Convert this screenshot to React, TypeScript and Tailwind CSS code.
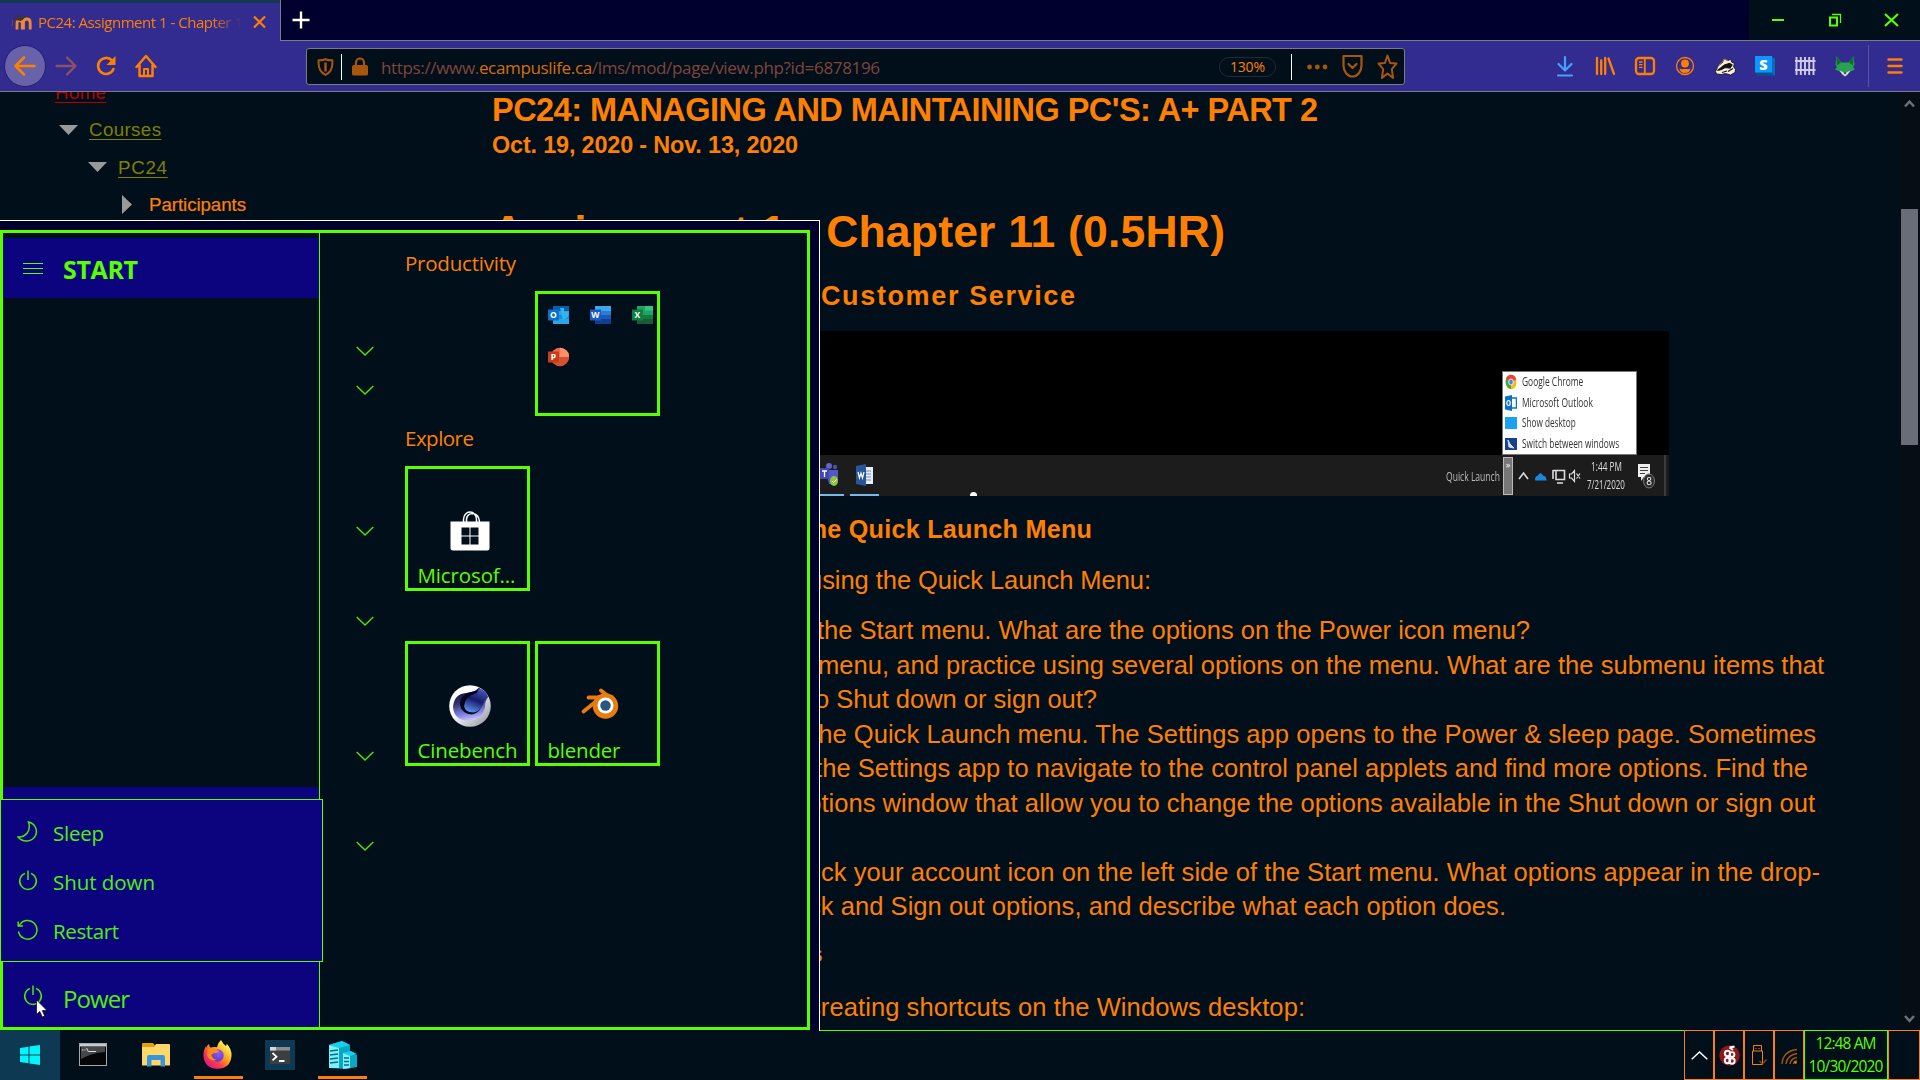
import { useLayoutEffect, useRef, type ReactNode } from "react";

const ARIAL = "font-['Liberation_Sans',Arial,sans-serif]";
const SEGOE = "font-['Open_Sans','Noto_Sans',sans-serif]";

/** A single line of text whose tracking is tuned so that it spans `w` pixels. */
function Fit({ w, className = "", children }: { w: number; className?: string; children: ReactNode }) {
  const ref = useRef<HTMLSpanElement>(null);
  useLayoutEffect(() => {
    const el = ref.current;
    if (!el) return;
    el.style.letterSpacing = "0px";
    const n = (el.textContent || "").length;
    const ls = (w - el.getBoundingClientRect().width) / Math.max(1, n - 1);
    el.style.letterSpacing = `${ls}px`;
    el.style.marginRight = `${-ls}px`;
  }, [w]);
  return (
    <span ref={ref} className={`inline-block whitespace-pre ${className}`}>
      {children}
    </span>
  );
}

/** A single line of text condensed horizontally to span `w` pixels. */
function Squeeze({ w, className = "", children }: { w: number; className?: string; children: ReactNode }) {
  const ref = useRef<HTMLSpanElement>(null);
  useLayoutEffect(() => {
    const el = ref.current;
    if (!el) return;
    el.style.transform = `scaleX(${w / el.offsetWidth})`;
  }, [w]);
  return (
    <span className={`block ${className}`} style={{ width: w }}>
      <span ref={ref} className="inline-block origin-left whitespace-pre">
        {children}
      </span>
    </span>
  );
}

/* ---------- browser chrome ---------- */

function TabStrip() {
  return (
    <div className="flex h-[41px] bg-[#00002e]">
      <div className="flex h-[41px] w-[281px] flex-col border-r border-[#7b7b86] bg-[#322b90]">
        <div className="h-[3px] bg-[#133a52]" />
        <div className="flex flex-1 items-center">
          <svg className="ml-[11px] h-[16px] w-[21px]" viewBox="0 0 21 16">
            <path d="M6 15.500V9Q6 6.500 8.500 6.500t2.800 2.500V15.500M12.500 15.500V8.500Q12.500 5 15.800 5q3.400 0 3.400 3.500V15.500" fill="none" stroke="#f08a2c" strokeWidth="2.800" />
            <path d="M1 5.500L8 1l7 1.500L10 7 4 6z" fill="#3b3345" />
            <path d="M1.500 5.500V12" stroke="#5b4a58" />
          </svg>
          <div className="ml-[6px] w-[206px] overflow-hidden [mask-image:linear-gradient(to_right,#000_84%,transparent_99%)]">
            <Fit w={205} className="text-[15px] leading-[22px] text-[#ff8000]">
              PC24: Assignment 1 - Chapter 1
            </Fit>
          </div>
          <svg className="ml-[9px] h-[14px] w-[13px]" viewBox="0 0 13 14">
            <path d="M1 1.500L12 12.500M12 1.500L1 12.500" stroke="#ff8000" strokeWidth="2.200" />
          </svg>
        </div>
      </div>
      <div className="flex flex-1 border-b border-[#7b7b86]">
        <svg className="ml-[11px] mt-[11px] h-[18px] w-[18px]" viewBox="0 0 18 18">
          <path d="M9 0.500V17.500M0.500 9H17.500" stroke="#fff" strokeWidth="2.400" />
        </svg>
        <div className="ml-auto flex h-[40px] w-[171px] bg-[#000f1a]">
          <svg className="h-[40px] w-[171px]" viewBox="0 0 171 40" fill="none" stroke="#59ff00">
            <path d="M23 20H35" strokeWidth="2" />
            <path d="M81 17.500h7v8h-7z" strokeWidth="2" />
            <path d="M83 14.500H91.500V23" strokeWidth="1.300" />
            <path d="M136 14L149 26M149 14L136 26" strokeWidth="2.200" />
          </svg>
        </div>
      </div>
    </div>
  );
}

function NavButtons() {
  return (
    <div className="flex h-[50px] w-[306px] items-center">
      <div className="ml-[4px] flex size-[42px] items-center justify-center rounded-full border border-[#231d75] bg-[#6863a8]">
        <svg className="size-[22px]" viewBox="0 0 22 22" fill="none" stroke="#ff8000" strokeWidth="2.500" strokeLinecap="round" strokeLinejoin="round">
          <path d="M20.500 11H2M10 2.500L1.500 11l8.500 8.500" />
        </svg>
      </div>
      <svg className="ml-[9px] size-[22px]" viewBox="0 0 22 22" fill="none" stroke="#8e5066" strokeWidth="2.300" strokeLinecap="round" strokeLinejoin="round">
        <path d="M1.500 11H20M12 2.500l8.500 8.500-8.500 8.500" />
      </svg>
      <svg className="ml-[18px] size-[22px]" viewBox="0 0 22 22" fill="none">
        <path d="M17 5.500A8 8 0 1 0 18.500 14" stroke="#ff8000" strokeWidth="2.600" strokeLinecap="round" />
        <path d="M20.500 1V10H11.500z" fill="#ff8000" />
      </svg>
      <svg className="ml-[18px] h-[24px] w-[22px]" viewBox="0 0 22 24" fill="none" stroke="#ff8000" strokeWidth="2.500" strokeLinejoin="round" strokeLinecap="round">
        <path d="M1.500 13L11 2l9.500 11M4.500 11.500V22H17.500V11.500" />
        <path d="M9 22V15h4V22" strokeWidth="2" />
      </svg>
    </div>
  );
}

function UrlBar() {
  return (
    <div className="mt-[7px] flex h-[37px] w-[1099px] items-center rounded-[3px] border border-[#7b7b86] bg-[#000f1a]">
      <svg className="ml-[10px] h-[18px] w-[17px]" viewBox="0 0 17 18" fill="none" stroke="#a8560c">
        <path d="M8.500 1.200C6.500 2 4 2.300 1.700 2.300c-.6 6 .6 11.700 6.800 14.500 6.200-2.800 7.400-8.500 6.800-14.500-2.300 0-4.800-.3-6.800-1.100z" strokeWidth="2" />
        <path d="M8.500 4.500v9" strokeWidth="2.500" />
      </svg>
      <div className="ml-[7px] h-[26px] w-px bg-white" />
      <svg className="ml-[10px] h-[19px] w-[16px]" viewBox="0 0 16 19">
        <rect y="8" width="16" height="10.500" rx="1.500" fill="#a8560c" />
        <path d="M4 9V5.500a4 4 0 0 1 8 0V9" fill="none" stroke="#a8560c" strokeWidth="2.200" />
      </svg>
      <div className="ml-[13px] w-[520px]">
        <Fit w={499} className="mt-[2px] text-[17px] leading-[24px] text-[#80453a]">
          https://www.<span className="text-[#d96e06]">ecampuslife.ca</span>/lms/mod/page/view.php?id=6878196
        </Fit>
      </div>
      <div className="ml-[318px] flex h-[20px] w-[57px] items-center justify-center rounded-full border border-[#1f2b38]">
        <Fit w={35} className="text-[14px] leading-[16px] text-[#ff8000]">130%</Fit>
      </div>
      <div className="ml-[15px] h-[26px] w-px bg-white" />
      <svg className="ml-[15px] h-[6px] w-[21px]" viewBox="0 0 21 6" fill="#a8560c">
        <circle cx="2.600" cy="3" r="2.400" />
        <circle cx="10.300" cy="3" r="2.400" />
        <circle cx="18" cy="3" r="2.400" />
      </svg>
      <svg className="ml-[14px] h-[25px] w-[21px]" viewBox="0 0 21 25" fill="none" stroke="#a8560c" strokeWidth="2.200" strokeLinecap="round" strokeLinejoin="round">
        <path d="M1.500 2h18V11.500c0 6-4 11-9 11S1.500 17.500 1.500 11.500z" />
        <path d="M6.500 10l4 4 4-4" />
      </svg>
      <svg className="ml-[14px] h-[26px] w-[21px]" viewBox="0 0 21 26" preserveAspectRatio="none" fill="none" stroke="#a8560c" strokeWidth="2" strokeLinejoin="round">
        <path d="M10.500 1.500l2.600 7.500 6.400.6-4.700 5.600 1.300 8.800-5.600-4.500-5.600 4.500 1.300-8.800L1.500 9.600l6.400-.6z" />
      </svg>
    </div>
  );
}

function ToolbarIcons() {
  return (
    <div className="ml-[149px] flex h-[50px] items-center">
      <div className="flex gap-[18px]">
        <svg className="size-[22px]" viewBox="0 0 22 22" fill="none" stroke="#45a1ff" strokeWidth="2.200" strokeLinecap="round" strokeLinejoin="round">
          <path d="M11 2V15M4.500 9L11 15.500 17.500 9M4 20.500H18" />
        </svg>
        <svg className="size-[22px]" viewBox="0 0 22 22" stroke="#ff8000" strokeWidth="2.300" strokeLinecap="round">
          <path d="M3 3V19M7.200 5.500V19M11.200 3V19M14.500 3.500L20 19" />
        </svg>
        <svg className="size-[22px]" viewBox="0 0 22 22" fill="none" stroke="#ff8000">
          <rect x="2" y="3" width="18" height="16" rx="3" strokeWidth="2.300" />
          <path d="M10.800 3V19" strokeWidth="1.800" />
          <path d="M5 7h3.500M5 9.700h3.500M5 12.400h3.500" strokeWidth="1.300" />
        </svg>
        <svg className="size-[22px]" viewBox="0 0 22 22">
          <circle cx="11" cy="11" r="8.500" fill="none" stroke="#ff8000" strokeWidth="1.300" />
          <ellipse cx="11" cy="8.600" rx="3.900" ry="4" fill="#ff8000" />
          <path d="M5.500 13.500c2 1.200 3.500.5 5.500.5s3.500.7 5.500-.5c-.5 3-2.500 4.500-5.500 4.500s-5-1.500-5.500-4.500z" fill="#ff8000" />
        </svg>
        <svg className="size-[22px]" viewBox="0 0 22 22">
          <path d="M1.500 16.500L4 11 8.500 7.500 10 4l4 1.500 3-1.500.500 3 3 1.500-1 3 2 3-.5 3-4.500 2.500-5-1.500-4 1-5-.5z" fill="#f4efe6" stroke="#1b1510" strokeWidth="0.900" />
          <path d="M3.500 15.500l7-5.500 5-1.500 2.500 1.500-2 3-5-.5-3.500 2zM8 17.500l5-1.500M14 16.500l5-3" stroke="#181310" strokeWidth="1.200" fill="#181310" />
          <path d="M4.500 10.500L8.500 7 10 4l4 1.500" stroke="#b27b40" fill="none" />
        </svg>
        <svg className="size-[22px]" viewBox="0 0 22 22">
          <path d="M1 1h16l4 3v17H4l-3-4z" fill="#06508f" />
          <path d="M17 1l4 3v17l-4-3.500z" fill="#0b6ab8" />
          <path d="M1 1h17v16.500H1z" fill="#0d96ff" />
          <text x="9.500" y="14.500" fontSize="14.500" fontWeight="800" fill="#fff" textAnchor="middle" className={SEGOE}>S</text>
        </svg>
        <svg className="size-[22px]" viewBox="0 0 22 22" stroke="#cfcbe6" strokeWidth="1.900">
          <path d="M2.500 2V20M6.800 2V20M11 2V20M15.200 2V20M19.500 2V20M1 6H21.500M1 15H21.500" />
        </svg>
        <svg className="size-[22px]" viewBox="0 0 22 22">
          <path d="M2.500 1l5 6.500h7l5-6.500 1 9-1.500 2 2 2.500-4.500 2-5.500 5-5.500-5-4.500-2 2-2.500-1.500-2z" fill="#2aa052" />
          <path d="M2.500 1l4.500 6.500-4 3zM19.500 1L15 7.500l4 3z" fill="#0f6b2c" />
          <path d="M5.500 15.500l3.500 1.500 2 1 2-1 3.500-1.500-3 4L11 21.500 8.500 19.500z" fill="#d8dce0" />
          <path d="M9.500 17.500h3L11 19.500z" fill="#222" />
        </svg>
      </div>
      <div className="ml-[12px] h-[42px] w-px bg-[#5853a3]" />
      <svg className="ml-[18px] h-[22px] w-[16px]" viewBox="0 0 16 22" stroke="#ff8000" strokeWidth="2.400" strokeLinecap="round">
        <path d="M1.500 4.500H14.500M1.500 11H14.500M1.500 17.500H14.500" />
      </svg>
    </div>
  );
}

/* ---------- page ---------- */

function Sidebar() {
  const link = "underline decoration-1 underline-offset-[3px]";
  return (
    <nav className={`w-[492px] shrink-0 text-[18.700px] leading-[37px] ${ARIAL}`}>
      <div className="-mt-[18px] ml-[55px] h-[37px] text-[#b80000]">
        <Fit w={51} className={link}>Home</Fit>
      </div>
      <div className="ml-[59px] flex h-[37px] items-center">
        <svg className="h-[10px] w-[19px]" viewBox="0 0 19 10"><path d="M0 0H19L9.500 10z" fill="#999" /></svg>
        <Fit w={72} className={`ml-[11px] text-[#808000] ${link}`}>Courses</Fit>
      </div>
      <div className="ml-[88px] flex h-[38px] items-center">
        <svg className="h-[10px] w-[19px]" viewBox="0 0 19 10"><path d="M0 0H19L9.500 10z" fill="#999" /></svg>
        <Fit w={49} className={`ml-[11px] text-[#808000] ${link}`}>PC24</Fit>
      </div>
      <div className="ml-[122px] flex h-[37px] items-center">
        <svg className="h-[19px] w-[10px]" viewBox="0 0 10 19"><path d="M0 0V19L10 9.500z" fill="#999" /></svg>
        <Fit w={97} className="ml-[17px] text-[#ff8000] [-webkit-text-stroke:0.2px_#ff8000]">Participants</Fit>
      </div>
    </nav>
  );
}

const BODY: { left: number; right: number; text: string }[] = [
  { left: 817, right: 1530, text: "the Start menu. What are the options on the Power icon menu?" },
  { left: 818, right: 1824, text: "menu, and practice using several options on the menu. What are the submenu items that" },
  { left: 808, right: 1097, text: "to Shut down or sign out?" },
  { left: 811, right: 1816, text: "the Quick Launch menu. The Settings app opens to the Power & sleep page. Sometimes" },
  { left: 815, right: 1808, text: "the Settings app to navigate to the control panel applets and find more options. Find the" },
  { left: 793, right: 1815, text: "options window that allow you to change the options available in the Shut down or sign out" },
  { left: 0, right: 0, text: "" },
  { left: 791, right: 1820, text: "Click your account icon on the left side of the Start menu. What options appear in the drop-" },
  { left: 788, right: 1506, text: "lock and Sign out options, and describe what each option does." },
];

function EmbeddedShot() {
  const items = [
    { label: "Google Chrome", w: 61 },
    { label: "Microsoft Outlook", w: 71 },
    { label: "Show desktop", w: 54 },
    { label: "Switch between windows", w: 97 },
  ];
  return (
    <div className={`ml-[328px] mt-[16px] flex h-[165px] w-[849px] flex-col bg-black ${SEGOE}`}>
      <div className="ml-[682px] mt-[40px] flex h-[84px] w-[135px] flex-col justify-around border border-[#777] bg-white">
        {items.map((it, i) => (
          <div key={it.label} className="flex h-[20px] items-center blur-[0.4px]">
            <svg className="ml-[2px] h-[16px] w-[12px]" viewBox="0 0 12 16">
              {i === 0 && (
                <>
                  <ellipse cx="6" cy="8" rx="5.500" ry="7.300" fill="#fbbc05" />
                  <path d="M6 8L.8 5.500Q2 .7 6 .7t5.200 4.800z" fill="#ea4335" />
                  <path d="M6 8L1 5Q-.5 13 6 15.300z" fill="#34a853" />
                  <ellipse cx="6" cy="8" rx="2.300" ry="3" fill="#4285f4" stroke="#fff" strokeWidth=".8" />
                </>
              )}
              {i === 1 && (
                <>
                  <path d="M5 3h6.500v10H5z" fill="#fff" stroke="#0a72c6" strokeWidth="1.500" />
                  <path d="M0 1.500L7 0v16l-7-1.500z" fill="#0a72c6" />
                  <ellipse cx="3.500" cy="8" rx="1.700" ry="2.500" fill="none" stroke="#fff" strokeWidth="1.200" />
                </>
              )}
              {i === 2 && <path d="M0 2h12v12H0z" fill="#1ba1f2" />}
              {i === 3 && (
                <>
                  <path d="M0 2h12v12H0z" fill="#17408f" />
                  <path d="M3 4l2 4 4 4-5-1z" fill="#cfe2f7" stroke="#cfe2f7" />
                </>
              )}
            </svg>
            <Squeeze w={it.w} className="ml-[5px] text-[12px] leading-[16px] text-[#333]">{it.label}</Squeeze>
          </div>
        ))}
      </div>
      <div className="mt-auto flex h-[41px] items-center bg-[#1c1c1c]">
        <div className="relative h-[41px] w-[21px]">
          <svg className="mt-[7px] h-[27px] w-[21px] blur-[0.4px]" viewBox="0 0 21 27">
            <circle cx="9" cy="4" r="3" fill="#6264c9" />
            <circle cx="15" cy="5" r="2.200" fill="#4b50b8" />
            <path d="M6 8h12v9q-3 6-9 5z" fill="#5558c4" />
            <path d="M0 6h9v11H0z" fill="#4146b4" />
            <path d="M2 9h5M4.500 9v6" stroke="#fff" strokeWidth="1.300" />
            <ellipse cx="14" cy="19" rx="4" ry="5" fill="#8cc63c" />
            <path d="M12 19l1.500 1.500 3-3" stroke="#fff" fill="none" />
          </svg>
          <div className="absolute bottom-0 left-0 h-[2px] w-[24px] bg-[#76b9ed]" />
        </div>
        <div className="relative ml-[9px] h-[41px] w-[30px]">
          <svg className="ml-[6px] mt-[9px] h-[22px] w-[17px] blur-[0.4px]" viewBox="0 0 17 22">
            <path d="M8 3h9v17H8z" fill="#e8eefa" />
            <path d="M10 7h5M10 10h5M10 13h5M10 16h5" stroke="#6b8fc9" />
            <path d="M0 2l10-2v22l-10-2z" fill="#2a5699" />
            <path d="M2 8l1.500 6L5 9l1.500 5L8 8" stroke="#fff" fill="none" strokeWidth="1.200" />
          </svg>
          <div className="absolute bottom-0 left-0 h-[2px] w-[29px] bg-[#76b9ed]" />
        </div>
        <div className="ml-[90px] mt-auto h-[4px] w-[7px] rounded-t-full bg-white" />
        <Squeeze w={54} className="ml-[469px] text-[13px] leading-[16px] text-[#bbb] blur-[0.3px]">Quick Launch</Squeeze>
        <div className="ml-[3px] h-[38px] w-[10px] border border-[#bbb] bg-[#777] text-center text-[9px] leading-[14px] text-white">»</div>
        <svg className="ml-[5px] h-[18px] w-[63px] blur-[0.3px]" viewBox="0 0 63 18" fill="none" stroke="#ddd" strokeWidth="1.600">
          <path d="M1 12l4.500-6L10 12" />
          <path d="M17 13q0-4 3-4.500 2.500-5 5 0 3.500 .5 3.500 5H18.500q-1.500 0-1.500-.5z" fill="#1a86dc" stroke="none" />
          <path d="M38 3.500h8.500v9h-8.500zM35 3v9M39 16h6M35 3.500h3" />
          <path d="M51.500 7h2l3-3.500v11l-3-3.500h-2zM58.500 6.500l3.500 5M62 6.500l-3.500 5" strokeWidth="1.200" />
        </svg>
        <div className="ml-[5px] flex w-[40px] flex-col items-center text-[#ddd] blur-[0.3px]">
          <Squeeze w={31} className="text-[12px] leading-[18px]">1:44 PM</Squeeze>
          <Squeeze w={38} className="text-[12px] leading-[18px]">7/21/2020</Squeeze>
        </div>
        <svg className="ml-[11px] h-[26px] w-[20px] blur-[0.3px]" viewBox="0 0 20 26">
          <path d="M1 1h12v13H7l-3 4v-4H1z" fill="#eee" />
          <path d="M3 4.500h8M3 7.500h8M3 10.500h5" stroke="#444" />
          <ellipse cx="12" cy="18" rx="5.500" ry="7" fill="#2c2c2c" stroke="#777" />
          <text x="12" y="22" fontSize="10" fill="#fff" textAnchor="middle" className={SEGOE}>8</text>
        </svg>
        <div className="ml-[7px] h-[41px] w-[2px] bg-[#3c3c3c]" />
      </div>
    </div>
  );
}

function Article() {
  const bodySize = "text-[25.500px]";
  return (
    <main className={`flex w-[1407px] shrink-0 flex-col text-[#ff8000] ${ARIAL}`}>
      <h2 className="h-[36px] text-[32.500px] font-bold leading-[36px]">
        <Fit w={826}>PC24: MANAGING AND MAINTAINING PC'S: A+ PART 2</Fit>
      </h2>
      <h3 className="h-[34px] text-[23.400px] font-bold leading-[34px]">
        <Fit w={306}>Oct. 19, 2020 - Nov. 13, 2020</Fit>
      </h3>
      <h1 className="mt-[42px] h-[56px] text-[44.500px] font-bold leading-[56px]">
        <Fit w={733}>Assignment 1 - Chapter 11 (0.5HR)</Fit>
      </h1>
      <h4 className="ml-[329px] mt-[18px] h-[37px] text-[27px] font-bold leading-[37px]">
        <Fit w={254}>Customer Service</Fit>
      </h4>
      <EmbeddedShot />
      <h4 className="ml-[311px] mt-[15px] h-[36px] text-[25.200px] font-bold leading-[36px]">
        <Fit w={289}>the Quick Launch Menu</Fit>
      </h4>
      <p className={`ml-[316px] mt-[15px] h-[36px] leading-[36px] ${bodySize}`}>
        <Fit w={343}>using the Quick Launch Menu:</Fit>
      </p>
      <div className={`mt-[15px] flex w-[1400px] flex-col ${bodySize}`}>
        {BODY.map((l, i) => (
          <div key={i} className="h-[34.500px] leading-[34.500px]" style={{ paddingLeft: Math.max(0, l.left - 492) }}>
            {l.text && <Fit w={l.right - l.left}>{l.text}</Fit>}
          </div>
        ))}
      </div>
      <h4 className="ml-[317px] mt-[12px] h-[36px] text-[24.500px] font-bold leading-[36px]">s</h4>
      <p className={`ml-[316px] mt-[17px] h-[36px] leading-[36px] ${bodySize}`}>
        <Fit w={497}>creating shortcuts on the Windows desktop:</Fit>
      </p>
    </main>
  );
}

function ScrollBar() {
  return (
    <div className="flex w-[21px] flex-col items-center bg-[#060d15]">
      <svg className="mt-[6px] h-[11px] w-[11px]" viewBox="0 0 11 11" fill="none" stroke="#6b7079" strokeWidth="2.500">
        <path d="M1 8.500L5.500 3.500 10 8.500" />
      </svg>
      <div className="mt-[100px] h-[236px] w-[17px] bg-[#6a6d77]" />
      <svg className="mb-[6px] mt-auto h-[11px] w-[11px]" viewBox="0 0 11 11" fill="none" stroke="#6b7079" strokeWidth="2.500">
        <path d="M1 3L5.500 8 10 3" />
      </svg>
    </div>
  );
}

/* ---------- start menu ---------- */

function PowerGlyph({ className = "" }: { className?: string }) {
  return (
    <svg className={`h-[21px] w-[20px] ${className}`} viewBox="0 0 20 21" fill="none" stroke="#4fe60a" strokeWidth="1.500">
      <path d="M7 3.400A8.300 8.300 0 1 0 13 3.400M10 0.500V10" />
    </svg>
  );
}

function Chevron({ className }: { className: string }) {
  return (
    <svg className={`h-[10px] w-[18px] shrink-0 ${className}`} viewBox="0 0 18 10" fill="none" stroke="#4fe60a" strokeWidth="1.400">
      <path d="M0.700 1L9 9 17.300 1" />
    </svg>
  );
}

function OfficeIcon({ letter }: { letter: "O" | "W" | "X" | "P" }) {
  const c = {
    O: ["#0a5ea8", "#28a8ea", "#50d9ff", "#0f6fd0"],
    W: ["#41a5ee", "#2b7cd3", "#103f91", "#185abd"],
    X: ["#21a366", "#33c481", "#185c37", "#107c41"],
    P: ["#ff8f6b", "#ff8f6b", "#d35230", "#c43e1c"],
  }[letter];
  return (
    <svg className="h-[20px] w-[21px]" viewBox="0 0 21 20">
      {letter === "P" ? (
        <>
          <circle cx="12" cy="10" r="9.200" fill={c[2]} />
          <path d="M12 .8a9.200 9.200 0 0 1 9.200 9.200H12z" fill={c[0]} />
          <path d="M12 .8A9.200 9.200 0 0 0 2.800 10H12z" fill="#ed6c47" />
        </>
      ) : (
        <>
          <path d="M5 1h16v6H5z" fill={c[0]} />
          <path d="M5 6h16v4H5z" fill={letter === "X" ? "#21a366" : c[1]} />
          <path d="M5 10h16v5H5z" fill={letter === "O" ? "#1490df" : c[3]} />
          <path d="M5 14h16v5H5z" fill={letter === "O" ? "#28a8ea" : c[2]} />
          {letter === "O" && <path d="M12 3h4v4h4v5l-5 3z" fill="#33b4f0" />}
          {letter === "X" && <path d="M13 1h8v4.500h-8z" fill="#33c481" />}
        </>
      )}
      <path d="M0 4.500h11v11H0z" fill={c[3]} />
      <text x="5.300" y="13" fontSize="8.500" fontWeight="700" fill="#fff" textAnchor="middle" className={SEGOE}>{letter}</text>
    </svg>
  );
}

function Tile({ label, w, children }: { label: string; w: number; children: ReactNode }) {
  return (
    <div className="relative flex size-[125px] flex-col items-center border-[3px] border-[#59ff00]">
      {children}
      <div className="absolute bottom-0 left-[9.500px] text-[20.500px] leading-[25px] text-[#59ff00]">
        <Fit w={w}>{label}</Fit>
      </div>
    </div>
  );
}

function PowerMenu() {
  const row = "flex h-[49px] items-center text-[20.500px] leading-[26px]";
  return (
    <div className="absolute left-0 top-[578px] flex h-[163px] w-[323px] flex-col border border-[#59ff00] bg-[#0c047e] pt-[7px] text-[#4ff00c]">
      <div className={row}>
        <svg className="ml-[16px] h-[21px] w-[21px]" viewBox="0 0 21 21" fill="none" stroke="#4fe60a" strokeWidth="1.500">
          <path d="M11.500 1C18 2.500 21 9 18.500 14.500 15.500 21 6 22 1 16 8.500 16.500 14.500 10 11.500 1z" />
        </svg>
        <Fit w={51} className="ml-[15px] mt-[2px]">Sleep</Fit>
      </div>
      <div className={row}>
        <PowerGlyph className="ml-[17px]" />
        <Fit w={102} className="ml-[15px] mt-[2px]">Shut down</Fit>
      </div>
      <div className={row}>
        <svg className="ml-[16px] h-[21px] w-[21px]" viewBox="0 0 21 21" fill="none" stroke="#4fe60a" strokeWidth="1.500">
          <path d="M1.500 12.500A9.300 9.300 0 1 0 2.500 6.300M1.200 2.500V7H6" />
        </svg>
        <Fit w={66} className="ml-[15px] mt-[2px]">Restart</Fit>
      </div>
    </div>
  );
}

function StartMenu() {
  return (
    <section className={`absolute left-0 top-[220px] h-[811px] w-[820px] border-r border-t border-white bg-[#00002e] pb-px pr-[9px] pt-[9px] ${SEGOE}`}>
      <div className="flex h-full w-full border-[3px] border-[#59ff00] bg-[#000f1a]">
        <div className="flex w-[317px] shrink-0 flex-col border-r border-[#59ff00] pt-[5px]">
          <div className="flex h-[60px] items-center bg-[#0c047e]">
            <div className="ml-[20px] flex w-[20px] flex-col gap-[4px]">
              <div className="h-px bg-[#59ff00]" />
              <div className="h-px bg-[#59ff00]" />
              <div className="h-px bg-[#59ff00]" />
            </div>
            <Fit w={75} className="ml-[20px] mt-px text-[25px] font-bold leading-[32px] text-[#59ff00]">START</Fit>
          </div>
          <div className="mt-auto flex h-[240px] flex-col justify-end bg-[#0c047e]">
            <div className="flex h-[65px] items-center">
              <PowerGlyph className="mt-[1px] ml-[20px]" />
              <Fit w={67} className="ml-[20px] mt-[8px] text-[24px] leading-[32px] text-[#4ff00c]">Power</Fit>
            </div>
          </div>
        </div>
        <div className="flex w-[86px] flex-col items-center pl-[4px]">
          <Chevron className="mt-[113px]" />
          <Chevron className="mt-[29px]" />
          <Chevron className="mt-[131px]" />
          <Chevron className="mt-[80px]" />
          <Chevron className="mt-[125px]" />
          <Chevron className="mt-[80px]" />
        </div>
        <div className="-ml-px flex flex-col text-[#ff8000]">
          <div className="mt-[16px] h-[42px] text-[20.500px] leading-[28px]"><Fit w={111}>Productivity</Fit></div>
          <div className="ml-[130px] grid size-[125px] grid-cols-[42px_42px_42px] grid-rows-[42px_42px] border-[3px] border-[#59ff00] pl-[10px] pt-[11px]">
            <OfficeIcon letter="O" />
            <OfficeIcon letter="W" />
            <OfficeIcon letter="X" />
            <OfficeIcon letter="P" />
          </div>
          <div className="mt-[8px] h-[42px] text-[20.500px] leading-[28px]"><Fit w={69}>Explore</Fit></div>
          <Tile label="Microsof..." w={98}>
            <svg className="ml-[5px] mt-[42px] h-[40px] w-[40px]" viewBox="0 0 40 40">
              <path d="M13.500 11V8.500a6.500 7.500 0 0 1 13 0V11M16.500 11V8.500Q17 2.500 23 2.500 29 3.500 29.500 11" fill="none" stroke="#fff" strokeWidth="1.500" />
              <path d="M.5 10.500h39V37q0 2.500-2.500 2.500H3Q.5 39.500.5 37z" fill="#fff" />
              <path d="M11.500 16.500h8v8h-8zM20.500 16.500h8v8h-8zM11.500 25.500h8v8h-8zM20.500 25.500h8v8h-8z" fill="#000f1a" />
            </svg>
          </Tile>
          <div className="mt-[50px] flex gap-[5px]">
            <Tile label="Cinebench" w={100}>
              <svg className="ml-[5px] mt-[41px] size-[42px]" viewBox="0 0 42 42">
                <defs>
                  <linearGradient id="cbRing" x1="0" y1="0" x2="1" y2="1">
                    <stop offset="0.400" stopColor="#fff" />
                    <stop offset="1" stopColor="#8b8e9a" />
                  </linearGradient>
                  <linearGradient id="cbBall" x1="0.200" y1="0" x2="0.400" y2="1">
                    <stop offset="0" stopColor="#070922" />
                    <stop offset="0.450" stopColor="#33336f" />
                    <stop offset="0.800" stopColor="#8083e8" />
                    <stop offset="1" stopColor="#c8c9f5" />
                  </linearGradient>
                  <linearGradient id="cbDrop" x1="0.700" y1="0" x2="0.300" y2="1">
                    <stop offset="0" stopColor="#4a5cc4" />
                    <stop offset="0.500" stopColor="#141a66" />
                    <stop offset="1" stopColor="#5f92f2" />
                  </linearGradient>
                </defs>
                <circle cx="21" cy="21" r="20.800" fill="url(#cbRing)" />
                <path d="M30 2.500L39 12Q36 16 36 22 33 36 19 36 5 35 4 22 5 9 17 8 25 8 30 2.500z" fill="url(#cbBall)" />
                <path d="M29 5.500Q10 8 11 20q2 9 12 9.500 10-2 12-16z" fill="#05061c" />
                <path d="M30 3q8 3 9 9-3 1-5 7-3 8-10 8.500-8-.5-9-6.500Q16 11 28 8z" fill="url(#cbDrop)" />
              </svg>
            </Tile>
            <Tile label="blender" w={73}>
              <svg className="ml-[5px] mt-[44px] h-[32px] w-[38px]" viewBox="0 0 38 32">
                <circle cx="24.500" cy="18" r="12.700" fill="#e87d0d" />
                <path d="M2.500 23.500L18 11M7.500 9.500H24M20 2.500L32 12" stroke="#e87d0d" strokeWidth="3.800" strokeLinecap="round" />
                <path d="M13 12l8-4 8 4-10 8-7-1z" fill="#e87d0d" />
                <circle cx="24.500" cy="17.500" r="8" fill="#fff" />
                <circle cx="24.500" cy="17.500" r="5.200" fill="#265787" />
              </svg>
            </Tile>
          </div>
        </div>
      </div>
      <PowerMenu />
      <svg className="absolute left-[36px] top-[778px] h-[19px] w-[12px]" viewBox="0 0 12 19">
        <path d="M.5 .8V15.500L3.800 12.500 6.300 18 8.700 17 6.300 11.600H11z" fill="#fff" stroke="#000" strokeWidth="0.700" />
      </svg>
    </section>
  );
}

/* ---------- taskbar ---------- */

function Taskbar() {
  const cell = "flex h-[50px] w-[30px] items-center justify-center border border-[#ff8000]";
  return (
    <footer className={`flex h-[50px] bg-[#000f1a] ${SEGOE}`}>
      <div className="z-10 flex w-[60px] items-center justify-center bg-[#0d3a52]">
        <svg className="size-[20px]" viewBox="0 0 20 20" fill="#00f6ff">
          <path d="M0 3l8.500-1.200V9.500H0zM9.500 1.600L20 0V9.500H9.500zM0 10.500h8.500v7.700L0 17zM9.500 10.500H20V20L9.500 18.400z" />
        </svg>
      </div>
      <div className="flex w-[760px] items-start">
        <svg className="ml-[19px] mt-[13px] h-[23px] w-[28px]" viewBox="0 0 28 23">
          <rect x=".5" y=".5" width="27" height="22" fill="#060606" stroke="#a5a9ac" />
          <path d="M1 1h26v2.500H1z" fill="#c8ccd0" />
          <path d="M2 4h24v5Q12 10 2 16z" fill="#45484a" />
          <path d="M3 7h1.500M5.500 7h1M7.500 5l2 4M10 8.500h7" stroke="#ddd" strokeWidth="1" />
        </svg>
        <svg className="ml-[35px] mt-[13px] h-[24px] w-[28px]" viewBox="0 0 28 24">
          <path d="M0 1q0-1 1-1h10l2 2.500V6H0z" fill="#e0a10a" />
          <path d="M0 4h12l2-3h13q1 0 1 1v20.500H0z" fill="#ffd766" />
          <path d="M5 23.500V14q0-2 2-2h14q2 0 2 2v9.500h-4.500V17h-9v6.500z" fill="#3a94dc" />
        </svg>
        <div className="ml-[24px] flex h-[50px] w-[49px] flex-col items-center">
          <svg className="ml-[-2px] mt-[10px] h-[29px] w-[29px]" viewBox="0 0 29 29">
            <defs>
              <linearGradient id="ffBody" x1="0.900" y1="0.100" x2="0.150" y2="0.900">
                <stop offset="0.100" stopColor="#fff44f" />
                <stop offset="0.450" stopColor="#ff9a1f" />
                <stop offset="0.700" stopColor="#ff4046" />
                <stop offset="1" stopColor="#e31587" />
              </linearGradient>
              <radialGradient id="ffCore" cx="0.600" cy="0.300" r="0.800">
                <stop offset="0" stopColor="#9059ff" />
                <stop offset="1" stopColor="#5a35c0" />
              </radialGradient>
            </defs>
            <path d="M18 0q2 4 5 6 1-1 .5-2.500Q29 9 28.500 16 27.500 28.500 14.500 28.800 1.500 28.500.5 16 .3 10 3 6l.3 2Q4 5 6 4q0 2 1.500 3.500 3-1 6.500-.3Q14.500 3 18 0z" fill="url(#ffBody)" />
            <circle cx="14.500" cy="15.500" r="6.200" fill="url(#ffCore)" />
            <path d="M4 10q4-3 9-1l3 2q-1 2-5 2-2 2-3 1 1 5 6 6-8 2-10-5z" fill="#ff8a16" />
          </svg>
          <div className="mb-[1px] mt-auto h-[3px] w-[49px] bg-[#ff8000]" />
        </div>
        <div className="ml-[22px] mt-[10px] flex size-[30px] items-center justify-center bg-[#0d3a52]">
          <svg className="h-[17px] w-[20px]" viewBox="0 0 20 17">
            <path d="M0 0h20v17H0z" fill="#3c3f42" />
            <path d="M0 0h20v3.500H0z" fill="#8a8d90" />
            <path d="M0 0h6v3.500H0z" fill="#d5d7d9" />
            <path d="M2.500 6l4 3.700-4 3.700M9 14h5.500" stroke="#fff" strokeWidth="1.800" fill="none" />
          </svg>
        </div>
        <div className="ml-[23px] flex h-[50px] w-[49px] flex-col items-center">
          <svg className="mt-[11px] h-[28px] w-[28px]" viewBox="0 0 28 28">
            <path d="M0 4L13 0l8 4v8l7 2v12l-11 2L0 27z" fill="#0aa6c4" />
            <path d="M0 4L13 0l8 4-11 3z" fill="#12d3ec" />
            <path d="M0 4l10 3v20L0 27z" fill="#7ff0fa" />
            <path d="M1 10l8-1M1 14l8-1M1 18l8-1M1 22l8-1" stroke="#086f88" strokeWidth="1.500" />
            <path d="M14 12l8-2 6 3-7 2z" fill="#12d3ec" />
            <path d="M14 12l7 3v12l-7 1z" fill="#7ff0fa" />
            <path d="M15 17l5 0M15 20.500h5M15 24h5" stroke="#086f88" strokeWidth="1.300" />
          </svg>
          <div className="mb-[1px] mt-auto h-[3px] w-[49px] bg-[#ff8000]" />
        </div>
      </div>
      <div className="w-[864px] border-t border-[#59ff00]" />
      <div className={cell}>
        <svg className="h-[9px] w-[17px]" viewBox="0 0 17 9" fill="none" stroke="#fff" strokeWidth="1.500"><path d="M.7 8.300L8.500 1l7.800 7.300" /></svg>
      </div>
      <div className={cell}>
        <svg className="size-[21px] shrink-0" viewBox="0 0 21 21" fill="none" stroke="#fff">
          <circle cx="10.500" cy="10.500" r="10.200" fill="#8e171c" stroke="none" />
          <path d="M15.500 1.500L10.500 2.500M10.500 2.500l3.500 2.500" strokeWidth="2" />
          <circle cx="8.500" cy="8.500" r="2.700" strokeWidth="1.900" />
          <circle cx="13" cy="9.500" r="2.400" strokeWidth="1.900" />
          <circle cx="8.500" cy="15.500" r="2.700" strokeWidth="1.900" />
          <circle cx="13" cy="16" r="2.700" strokeWidth="1.900" />
        </svg>
      </div>
      <div className={cell}>
        <svg className="h-[20px] w-[16px]" viewBox="0 0 16 20" fill="none" stroke="#ff8000">
          <path d="M2.500 6V.5h8V6M1.500 6h10v13.500h-10zM4.500 3.500h1M7.500 3.500h1" />
          <path d="M8.500 16l3 3 4-4.500" stroke="#8a4a0a" strokeWidth="1.300" />
        </svg>
      </div>
      <div className={cell}>
        <svg className="mt-[3px] size-[17px]" viewBox="0 0 17 17" fill="none" stroke="#a8560c" strokeWidth="1.300">
          <path d="M1 16Q2 3 16 1.500M5 16Q6 7 16 5.500M9 16q1-6 7-6.500" />
          <path d="M12.500 16q.5-3 3.500-3" />
          <circle cx="14.500" cy="14.500" r="1.200" fill="#ff8000" stroke="none" />
        </svg>
      </div>
      <div className="flex h-[50px] w-[84px] flex-col items-center border border-[#59ff00] pt-[1px] text-[15.500px] leading-[23px] text-[#59ff00]">
        <Fit w={61}>12:48 AM</Fit>
        <Fit w={75}>10/30/2020</Fit>
      </div>
      <div className="h-[50px] w-[32px] border border-[#ff8000]" />
    </footer>
  );
}

export default function App() {
  return (
    <div className={`relative flex h-[1080px] w-[1920px] flex-col overflow-hidden bg-[#000f1a] ${SEGOE}`}>
      <TabStrip />
      <div className="flex h-[51px] border-b border-[#7b7b86] bg-[#322b90]">
        <NavButtons />
        <UrlBar />
        <ToolbarIcons />
      </div>
      <div className="flex h-[938px] overflow-hidden">
        <Sidebar />
        <Article />
        <ScrollBar />
      </div>
      <StartMenu />
      <Taskbar />
    </div>
  );
}
